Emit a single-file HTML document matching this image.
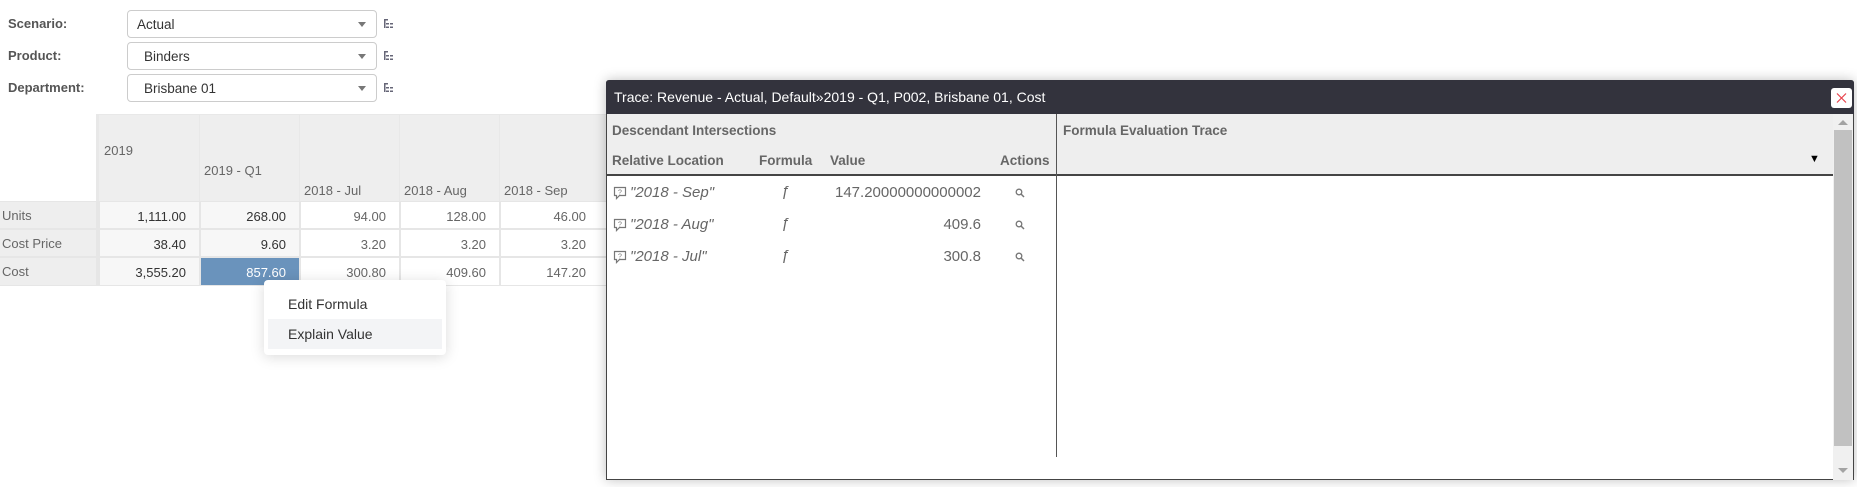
<!DOCTYPE html>
<html><head><meta charset="utf-8"><style>
*{box-sizing:border-box;margin:0;padding:0}
body{width:1857px;height:487px;background:#fff;font-family:"Liberation Sans",sans-serif;color:#333;position:relative;overflow:hidden;font-size:13px}
.abs{position:absolute}
.lbl{font-weight:bold;color:#555;font-size:13px}
.dd{position:absolute;left:127px;width:250px;height:28px;border:1px solid #ccc;border-radius:4px;font-size:13.5px;color:#333;padding:6px 0 0 9px}
.dd:after{content:"";position:absolute;right:10px;top:11px;border-left:4px solid transparent;border-right:4px solid transparent;border-top:5px solid #777}
.c{position:absolute;font-size:13px;color:#666}
.hd{background:#eee}
.v{text-align:right;padding-right:13px;padding-top:7px}
.rw{position:absolute;font-size:15px;color:#666;font-style:italic}
</style></head><body>
<div class="abs lbl" style="left:8px;top:16px">Scenario:</div>
<div class="abs lbl" style="left:8px;top:48px">Product:</div>
<div class="abs lbl" style="left:8px;top:80px">Department:</div>
<div class="dd" style="top:10px">Actual</div>
<div class="dd" style="top:42px;padding-left:16px">Binders</div>
<div class="dd" style="top:74px;padding-left:16px">Brisbane 01</div>
<svg class="abs" style="left:383px;top:18px" width="12" height="80"><g fill="#667">
<rect x="1" y="1" width="1.5" height="9"/><rect x="1" y="1" width="4" height="1.5"/><rect x="3" y="5" width="3" height="1.5"/><rect x="3" y="8.5" width="3" height="1.5"/><rect x="7" y="5" width="3" height="1.5"/><rect x="7" y="8.5" width="3" height="1.5"/>
<g transform="translate(0,32)"><rect x="1" y="1" width="1.5" height="9"/><rect x="1" y="1" width="4" height="1.5"/><rect x="3" y="5" width="3" height="1.5"/><rect x="3" y="8.5" width="3" height="1.5"/><rect x="7" y="5" width="3" height="1.5"/><rect x="7" y="8.5" width="3" height="1.5"/></g>
<g transform="translate(0,64)"><rect x="1" y="1" width="1.5" height="9"/><rect x="1" y="1" width="4" height="1.5"/><rect x="3" y="5" width="3" height="1.5"/><rect x="3" y="8.5" width="3" height="1.5"/><rect x="7" y="5" width="3" height="1.5"/><rect x="7" y="8.5" width="3" height="1.5"/></g></g></svg>

<div class="abs" style="left:96px;top:114px;width:520px;height:88px;background:#e8e8e8"></div>
<div class="c hd" style="left:99px;top:115px;width:100px;height:86px;padding:28px 0 0 5px">2019</div>
<div class="c hd" style="left:200px;top:115px;width:99px;height:86px;padding:48px 0 0 4px">2019 - Q1</div>
<div class="c hd" style="left:300px;top:115px;width:99px;height:86px;padding:68px 0 0 4px">2018 - Jul</div>
<div class="c hd" style="left:400px;top:115px;width:99px;height:86px;padding:68px 0 0 4px">2018 - Aug</div>
<div class="c hd" style="left:500px;top:115px;width:110px;height:86px;padding:68px 0 0 4px">2018 - Sep</div>
<div class="abs" style="left:0;top:201px;width:616px;height:85px;background:#e6e6e6"></div>
<div class="c hd" style="left:0;top:202px;width:96px;height:26px;padding:6px 0 0 2px">Units</div>
<div class="c hd" style="left:0;top:230px;width:96px;height:26px;padding:6px 0 0 2px">Cost Price</div>
<div class="c hd" style="left:0;top:258px;width:96px;height:27px;padding:6px 0 0 2px">Cost</div>
<div class="c v" style="left:100px;top:202px;width:99px;height:26px;background:#f7f7f7;color:#333">1,111.00</div>
<div class="c v" style="left:201px;top:202px;width:98px;height:26px;background:#f7f7f7;color:#333">268.00</div>
<div class="c v" style="left:301px;top:202px;width:98px;height:26px;background:#fff">94.00</div>
<div class="c v" style="left:401px;top:202px;width:98px;height:26px;background:#fff">128.00</div>
<div class="c v" style="left:501px;top:202px;width:105px;height:26px;background:#fff;padding-right:20px">46.00</div>
<div class="c v" style="left:100px;top:230px;width:99px;height:26px;background:#f7f7f7;color:#333">38.40</div>
<div class="c v" style="left:201px;top:230px;width:98px;height:26px;background:#f7f7f7;color:#333">9.60</div>
<div class="c v" style="left:301px;top:230px;width:98px;height:26px;background:#fff">3.20</div>
<div class="c v" style="left:401px;top:230px;width:98px;height:26px;background:#fff">3.20</div>
<div class="c v" style="left:501px;top:230px;width:105px;height:26px;background:#fff;padding-right:20px">3.20</div>
<div class="c v" style="left:100px;top:258px;width:99px;height:27px;background:#f7f7f7;color:#333">3,555.20</div>
<div class="c v" style="left:201px;top:258px;width:98px;height:27px;background:#6a93bc;color:#fff">857.60</div>
<div class="c v" style="left:301px;top:258px;width:98px;height:27px;background:#fff">300.80</div>
<div class="c v" style="left:401px;top:258px;width:98px;height:27px;background:#fff">409.60</div>
<div class="c v" style="left:501px;top:258px;width:105px;height:27px;background:#fff;padding-right:20px">147.20</div>

<div class="abs" style="left:264px;top:280px;width:182px;height:75px;background:#fff;border-radius:4px;box-shadow:0 2px 14px rgba(0,0,0,.15)">
<div style="position:absolute;left:24px;top:16px;font-size:14px;color:#333">Edit Formula</div>
<div style="position:absolute;left:4px;top:39px;width:174px;height:30px;background:#f3f4f6"></div>
<div style="position:absolute;left:24px;top:46px;font-size:14px;color:#333">Explain Value</div>
</div>

<div class="abs" style="left:606px;top:80px;width:1248px;height:400px;background:#fff;border:1px solid #444;border-top:none;box-shadow:0 0 12px rgba(0,0,0,.25);border-radius:3px 3px 0 0">
<div style="position:absolute;left:-1px;top:0;width:1248px;height:34px;background:#33333d;border-radius:3px 3px 0 0;color:#fff;font-size:14px;padding:9px 0 0 8px">Trace: Revenue - Actual, Default»2019 - Q1, P002, Brisbane 01, Cost</div>
<svg style="position:absolute;left:1224px;top:8px" width="21" height="20"><rect width="21" height="20" rx="3" fill="#fff"/><path d="M6 5.5l9 9M15 5.5l-9 9" stroke="#e8414a" stroke-width="1.2"/></svg>
<div style="position:absolute;left:0;top:34px;width:1226px;height:62px;background:#eee;border-bottom:2px solid #444"></div>
<div style="position:absolute;left:449px;top:34px;width:1px;height:343px;background:#555"></div>
<div style="position:absolute;left:5px;top:43px;font-weight:bold;color:#666;font-size:13.5px">Descendant Intersections</div>
<div style="position:absolute;left:5px;top:73px;font-weight:bold;color:#666;font-size:13.5px">Relative Location</div>
<div style="position:absolute;left:152px;top:73px;font-weight:bold;color:#666;font-size:13.5px">Formula</div>
<div style="position:absolute;left:223px;top:73px;font-weight:bold;color:#666;font-size:13.5px">Value</div>
<div style="position:absolute;left:393px;top:73px;font-weight:bold;color:#666;font-size:13.5px">Actions</div>
<div style="position:absolute;left:456px;top:43px;font-weight:bold;color:#666;font-size:13.5px">Formula Evaluation Trace</div>
<div style="position:absolute;left:1202px;top:73px;font-size:11px;color:#000">▼</div>
<div style="position:absolute;left:1226px;top:34px;width:20px;height:366px;background:#f0f0f0"></div>
<div style="position:absolute;left:1227px;top:50px;width:18px;height:316px;background:#c1c1c1"></div>
<div style="position:absolute;left:1231px;top:40px;border-left:5px solid transparent;border-right:5px solid transparent;border-bottom:5px solid #a3a3a3"></div>
<div style="position:absolute;left:1231px;top:388px;border-left:5px solid transparent;border-right:5px solid transparent;border-top:5px solid #a3a3a3"></div>
</div>

<svg class="abs" style="left:613px;top:186px" width="14" height="14"><path d="M1.5 1.5h11v8h-6l-3 3v-3h-2z" fill="none" stroke="#777" stroke-width="1.2"/><text x="7" y="8.5" font-size="7" text-anchor="middle" fill="#777" font-family="Liberation Sans">?</text></svg>
<div class="rw" style="left:630px;top:184px">"2018 - Sep"</div>
<div class="rw" style="left:781px;top:183px">ƒ</div>
<div class="abs" style="left:800px;top:184px;width:181px;text-align:right;font-size:15px;color:#666">147.20000000000002</div>
<svg class="abs" style="left:1015px;top:188px" width="10" height="10"><circle cx="4" cy="4" r="2.8" fill="none" stroke="#777" stroke-width="1.3"/><path d="M6 6l3 3" stroke="#777" stroke-width="1.5"/></svg>

<svg class="abs" style="left:613px;top:218px" width="14" height="14"><path d="M1.5 1.5h11v8h-6l-3 3v-3h-2z" fill="none" stroke="#777" stroke-width="1.2"/><text x="7" y="8.5" font-size="7" text-anchor="middle" fill="#777" font-family="Liberation Sans">?</text></svg>
<div class="rw" style="left:630px;top:216px">"2018 - Aug"</div>
<div class="rw" style="left:781px;top:215px">ƒ</div>
<div class="abs" style="left:800px;top:216px;width:181px;text-align:right;font-size:15px;color:#666">409.6</div>
<svg class="abs" style="left:1015px;top:220px" width="10" height="10"><circle cx="4" cy="4" r="2.8" fill="none" stroke="#777" stroke-width="1.3"/><path d="M6 6l3 3" stroke="#777" stroke-width="1.5"/></svg>

<svg class="abs" style="left:613px;top:250px" width="14" height="14"><path d="M1.5 1.5h11v8h-6l-3 3v-3h-2z" fill="none" stroke="#777" stroke-width="1.2"/><text x="7" y="8.5" font-size="7" text-anchor="middle" fill="#777" font-family="Liberation Sans">?</text></svg>
<div class="rw" style="left:630px;top:248px">"2018 - Jul"</div>
<div class="rw" style="left:781px;top:247px">ƒ</div>
<div class="abs" style="left:800px;top:248px;width:181px;text-align:right;font-size:15px;color:#666">300.8</div>
<svg class="abs" style="left:1015px;top:252px" width="10" height="10"><circle cx="4" cy="4" r="2.8" fill="none" stroke="#777" stroke-width="1.3"/><path d="M6 6l3 3" stroke="#777" stroke-width="1.5"/></svg>
</body></html>
